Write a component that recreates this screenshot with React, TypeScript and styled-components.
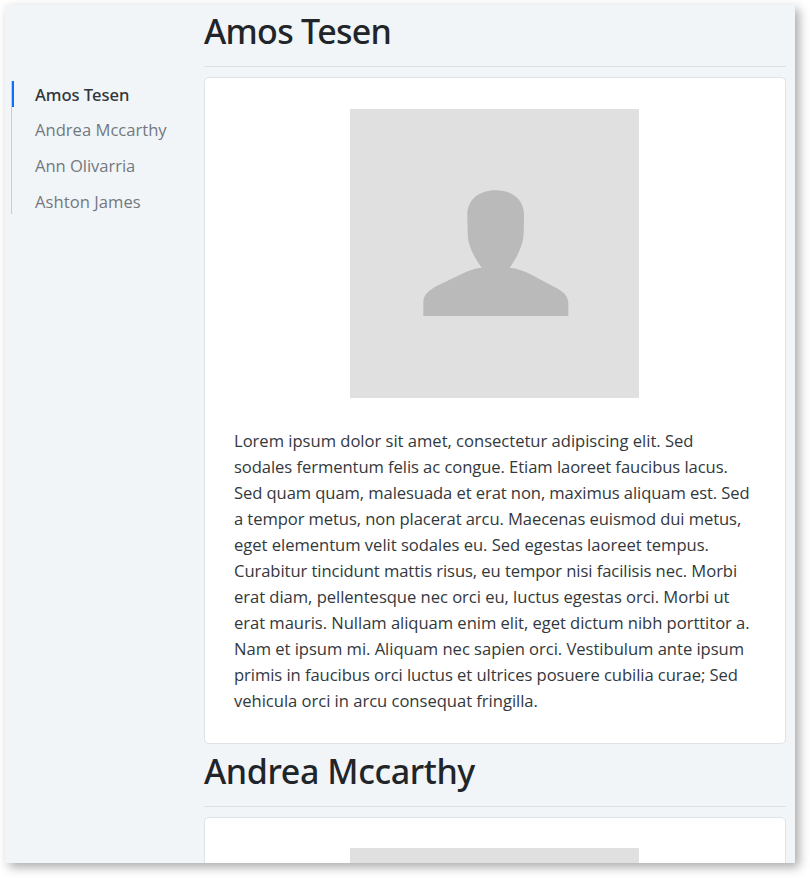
import React from "react";
import styled, { createGlobalStyle } from "styled-components";

const GlobalStyle = createGlobalStyle`
  *, *::before, *::after { box-sizing: border-box; }
  html, body { margin: 0; height: 878px; overflow: hidden; background: #fff; }
  body { font-family: "Open Sans", "Noto Sans", sans-serif; color: #212529; }
`;

const Page = styled.div`
  padding: 5px;
`;

const Viewport = styled.div`
  display: flex;
  width: 790px;
  height: 858px;
  overflow: hidden;
  background: #f1f5f8;
  box-shadow: 4px 4px 10px rgba(0, 0, 0, 0.34);
`;

const Sidebar = styled.aside`
  flex: none;
  width: 199px;
  padding: 76px 0 0 6px;
`;

const NavList = styled.nav`
  display: flex;
  flex-direction: column;
  gap: 10px;
  height: 133px;
  border-left: 1px solid #c9ced2;
`;

const NavItem = styled.a<{ $active?: boolean; $tracking?: number }>`
  flex: none;
  height: 26px;
  padding-left: 21px;
  border-left: 2px solid ${(p) => (p.$active ? "#0d6efd" : "transparent")};
  font-family: ${(p) => (p.$active ? '"Noto Sans"' : '"Open Sans"')}, sans-serif;
  font-size: 16.6px;
  font-weight: ${(p) => (p.$active ? 500 : 400)};
  line-height: ${(p) => (p.$active ? 28 : 26)}px;
  letter-spacing: ${(p) => p.$tracking ?? 0}px;
  white-space: nowrap;
  color: ${(p) => (p.$active ? "#30363b" : "#73797e")};
`;

const Content = styled.main`
  flex: none;
  width: 582px;
  margin-top: -1px;
`;

const SectionHeader = styled.header`
  height: 73px;
  padding-bottom: 10px;
`;

const Heading = styled.h1<{ $tracking: number }>`
  height: 63px;
  margin: 0;
  padding-top: 3px;
  border-bottom: 1px solid #dce1e5;
  font-family: "Noto Sans", sans-serif;
  font-size: 34px;
  font-weight: 500;
  line-height: 48px;
  letter-spacing: ${(p) => p.$tracking}px;
`;

const Card = styled.article<{ $inset: number }>`
  display: flex;
  flex-direction: column;
  align-items: center;
  gap: 30px;
  min-height: 667px;
  padding: ${(p) => p.$inset}px 30px 29px 29px;
  border: 1px solid #dfe3e7;
  border-radius: 5px;
  background: #fff;
`;

const Portrait = styled.svg`
  display: block;
  flex: none;
  width: 289px;
  height: 289px;
  background: #e0e0e0;
`;

const Bio = styled.p`
  align-self: stretch;
  margin: 0;
  color: #33383c;
`;

const BioLine = styled.span<{ $tracking: number }>`
  display: block;
  font-size: 16.6px;
  line-height: 26px;
  letter-spacing: ${(p) => p.$tracking}px;
  white-space: nowrap;
`;

const bio: [string, number][] = [
  ["Lorem ipsum dolor sit amet, consectetur adipiscing elit. Sed", -0.02],
  ["sodales fermentum felis ac congue. Etiam laoreet faucibus lacus.", -0.07],
  ["Sed quam quam, malesuada et erat non, maximus aliquam est. Sed", -0.09],
  ["a tempor metus, non placerat arcu. Maecenas euismod dui metus,", -0.09],
  ["eget elementum velit sodales eu. Sed egestas laoreet tempus.", -0.03],
  ["Curabitur tincidunt mattis risus, eu tempor nisi facilisis nec. Morbi", -0.07],
  ["erat diam, pellentesque nec orci eu, luctus egestas orci. Morbi ut", -0.04],
  ["erat mauris. Nullam aliquam enim elit, eget dictum nibh porttitor a.", -0.045],
  ["Nam et ipsum mi. Aliquam nec sapien orci. Vestibulum ante ipsum", -0.035],
  ["primis in faucibus orci luctus et ultrices posuere cubilia curae; Sed", -0.065],
  ["vehicula orci in arcu consequat fringilla.", -0.03],
];

const people = [
  { name: "Amos Tesen", nav: -0.05, heading: -0.7 },
  { name: "Andrea Mccarthy", nav: 0, heading: -0.4 },
  { name: "Ann Olivarria", nav: -0.05, heading: 0 },
  { name: "Ashton James", nav: 0.05, heading: 0 },
];

interface PersonSectionProps {
  name: string;
  tracking: number;
  inset: number;
  showBio: boolean;
}

function PersonSection({ name, tracking, inset, showBio }: PersonSectionProps) {
  return (
    <section>
      <SectionHeader>
        <Heading $tracking={tracking}>{name}</Heading>
      </SectionHeader>
      <Card $inset={inset}>
        <Portrait viewBox="-150 -183 867 867" role="img" aria-label={name}>
          <path
            fill="#bababa"
            d="M70 438V395C70 375 88 360 110 348L185 312C205 302 222 295 245 293C228 270 203 230 203 190L202 135C202 89 237 61 287 61C337 61 372 89 372 135L371 190C371 225 347 270 329 293C352 295 370 302 390 312L462 350C485 361 505 375 505 400V438Z"
          />
        </Portrait>
        {showBio && (
          <Bio>
            {bio.map(([text, spacing]) => (
              <BioLine key={text} $tracking={spacing}>
                {text}
              </BioLine>
            ))}
          </Bio>
        )}
      </Card>
    </section>
  );
}

export default function App() {
  return (
    <Page>
      <GlobalStyle />
      <Viewport>
        <Sidebar>
          <NavList>
            {people.map((p, i) => (
              <NavItem key={p.name} $active={i === 0} $tracking={p.nav}>
                {p.name}
              </NavItem>
            ))}
          </NavList>
        </Sidebar>
        <Content>
          {people.slice(0, 2).map((p, i) => (
            <PersonSection
              key={p.name}
              name={p.name}
              tracking={p.heading}
              inset={i === 0 ? 31 : 30}
              showBio={i === 0}
            />
          ))}
        </Content>
      </Viewport>
    </Page>
  );
}
